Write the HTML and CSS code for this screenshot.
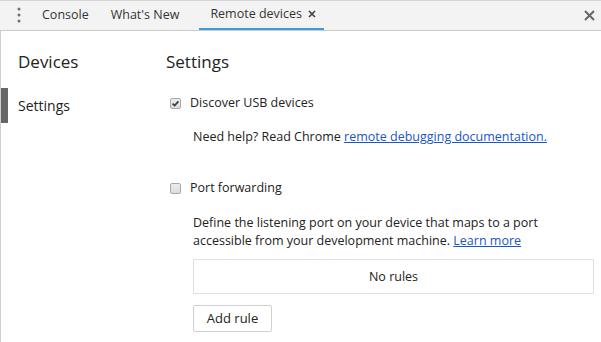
FILE: index.html
```html
<!DOCTYPE html>
<html>
<head>
<meta charset="utf-8">
<link rel="stylesheet" href="styles.css">
</head>
<body>
<div class="toolbar">
  <div class="menu">
    <svg width="4" height="16" viewBox="0 0 4 16"><circle cx="2" cy="2" r="1.5"/><circle cx="2" cy="8" r="1.5"/><circle cx="2" cy="14" r="1.5"/></svg>
  </div>
  <div class="tab">Console</div>
  <div class="tab">What's New</div>
  <div class="tab active">Remote devices<svg class="tabx" width="8" height="8" viewBox="0 0 8 8"><path d="M1 1L7 7M7 1L1 7"/></svg></div>
  <div class="spacer"></div>
  <div class="close"><svg width="11" height="11" viewBox="0 0 11 11"><path d="M1 1L10 10M10 1L1 10"/></svg></div>
</div>
<div class="page">
  <div class="sidebar">
    <div class="side-title">Devices</div>
    <div class="side-item selected">Settings</div>
  </div>
  <div class="main">
    <div class="title">Settings</div>
    <div class="check-row row-usb">
      <span class="cb checked"><svg width="9" height="9" viewBox="0 0 9 9"><path d="M1.6 4.6L3.6 6.6L7.4 2.4"/></svg></span>
      <span>Discover USB devices</span>
    </div>
    <div class="note help">Need help? Read Chrome <a href="#">remote debugging documentation.</a></div>
    <div class="check-row row-port">
      <span class="cb"></span>
      <span>Port forwarding</span>
    </div>
    <div class="note define"><span>Define the listening port on your device that maps to a port</span><br><span>accessible from your development machine.</span> <a href="#">Learn more</a></div>
    <div class="rules">No rules</div>
    <button class="add">Add rule</button>
  </div>
</div>
</body>
</html>
```
FILE: styles.css
```css
html, body {
  margin: 0;
  padding: 0;
  background: #fff;
}
body {
  font-family: "Open Sans", "Noto Sans", sans-serif;
  font-size: 12.5px;
  color: #222;
  width: 601px;
  height: 342px;
  overflow: hidden;
}
.toolbar {
  display: flex;
  align-items: stretch;
  height: 29px;
  background: #f3f3f3;
  border-top: 1px solid #d6d6d6;
  border-bottom: 1px solid #cbcbcb;
  box-sizing: content-box;
}
.menu {
  width: 31px;
  display: flex;
  align-items: center;
  padding-left: 17px;
  box-sizing: border-box;
}
.menu svg {
  fill: #707070;
  margin-top: -1px;
}
.tab {
  display: flex;
  align-items: center;
  padding: 0 11px;
  color: #333;
  font-size: 12.5px;
  margin-top: -2px;
}
.tab.active {
  margin-left: 9px;
  padding-right: 8px;
  margin-top: 0;
  padding-bottom: 2px;
  border-bottom: 2px solid #3d9bd6;
  box-sizing: border-box;
}
.tabx {
  margin-left: 6px;
  stroke: #444;
  stroke-width: 1.7;
  fill: none;
}
.spacer {
  flex: 1;
}
.close {
  display: flex;
  align-items: center;
  padding-right: 3px;
  width: 14px;
}
.close svg {
  stroke: #666;
  stroke-width: 2;
  fill: none;
}
.page {
  display: flex;
  height: 311px;
  border-left: 1px solid #cfcfcf;
}
.sidebar {
  width: 149px;
  flex: none;
  padding-top: 19px;
}
.side-title {
  font-size: 17px;
  line-height: 24px;
  padding-left: 17px;
  color: #222;
  margin-bottom: 14px;
}
.side-item {
  font-size: 14px;
  line-height: 35px;
  height: 35px;
  padding-left: 10px;
  color: #222;
}
.side-item.selected {
  border-left: 7px solid #666;
}
.main {
  flex: 1;
  padding: 19px 7px 0 16px;
}
.title {
  font-size: 17px;
  line-height: 24px;
  color: #222;
}
.check-row {
  display: flex;
  align-items: center;
  line-height: 18px;
  padding-left: 4px;
}
.row-usb {
  margin-top: 20px;
}
.row-port {
  margin-top: 33px;
}
.cb {
  width: 11px;
  height: 11px;
  box-sizing: border-box;
  border: 1px solid #a9a9a9;
  border-radius: 2px;
  background: linear-gradient(#ededed, #dcdcdc);
  margin-right: 9px;
  display: flex;
  align-items: center;
  justify-content: center;
}
.cb svg {
  stroke: #3a3a3a;
  stroke-width: 1.7;
  fill: none;
}
.note {
  padding-left: 27px;
  line-height: 18px;
  color: #222;
}
.help {
  margin-top: 16px;
}
.define {
  margin-top: 17px;
}
a {
  color: #1a56c6;
  text-decoration: underline;
}
.rules {
  margin: 9px 0 0 27px;
  height: 35px;
  box-sizing: border-box;
  border: 1px solid #e0e0e0;
  text-align: center;
  line-height: 33px;
  color: #222;
}
.add {
  display: block;
  margin: 11px 0 0 27px;
  width: 79px;
  height: 27px;
  background: #fff;
  border: 1px solid #d0d0d0;
  border-radius: 2px;
  font-family: "Open Sans", "Noto Sans", sans-serif;
  font-size: 13px;
  line-height: 23px;
  color: #222;
  padding: 0;
}
```
